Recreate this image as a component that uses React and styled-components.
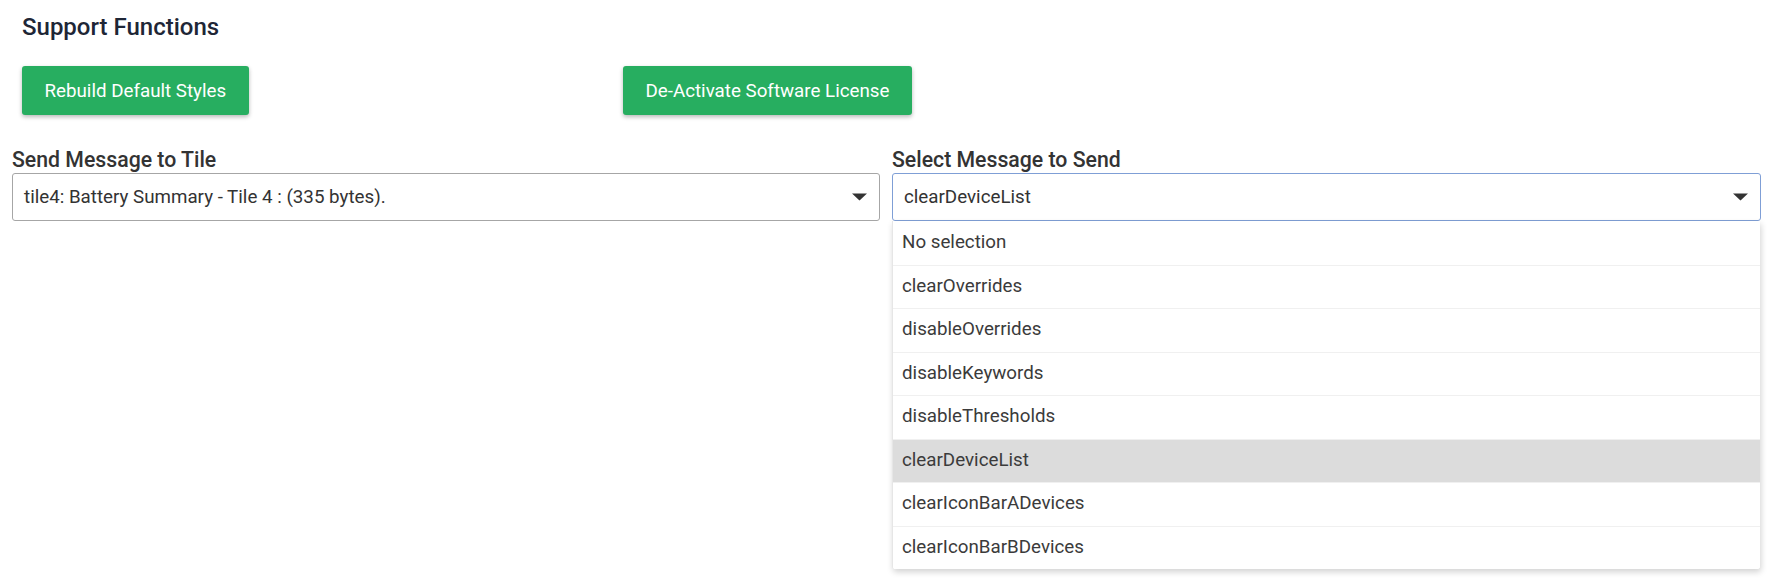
import React from "react";
import styled, { createGlobalStyle } from "styled-components";

const Global = createGlobalStyle`
  html, body { margin: 0; padding: 0; background: #ffffff; }
  body { font-family: Roboto, "Liberation Sans", Arial, sans-serif; overflow: hidden; }
  * { box-sizing: border-box; }
`;

const Page = styled.div`
  width: 1789px;
  height: 587px;
  padding: 13px 28px 0 12px;
`;

const Title = styled.h2`
  margin: 0 0 0 10px;
  font-size: 24px;
  line-height: 28px;
  font-weight: 500;
  color: #1e2636;
`;

const ButtonRow = styled.div`
  display: grid;
  grid-template-columns: 601px auto;
  justify-items: start;
  margin: 25px 0 0 10px;
`;

const GreenButton = styled.button`
  height: 49px;
  padding: 0 22.5px;
  border: none;
  border-radius: 3px;
  background: #27ae60;
  color: #ffffff;
  font-family: Roboto, "Liberation Sans", Arial, sans-serif;
  font-size: 18.75px;
  font-weight: 400;
  box-shadow: 0 2px 4px rgba(0, 0, 0, 0.28);
  cursor: pointer;
`;

const Fields = styled.div`
  display: grid;
  grid-template-columns: 868px 869px;
  column-gap: 12px;
  margin-top: 34px;
`;

const Field = styled.div`
  position: relative;
  display: flex;
  flex-direction: column;
`;

const Label = styled.label`
  font-size: 21.25px;
  line-height: 22px;
  font-weight: 500;
  color: #333333;
  margin-bottom: 2px;
`;

const SelectBox = styled.div`
  height: 48px;
  display: flex;
  align-items: center;
  justify-content: space-between;
  padding: 0 12px 0 11px;
  border: 1px solid ${(p) => (p.$focused ? "#7f9fd6" : "#a6a6a6")};
  border-radius: 3px;
  background: #ffffff;
  font-size: 18.75px;
  color: #333333;
`;

const Arrow = styled.svg`
  width: 15px;
  height: 8px;
  flex: none;
`;

const Menu = styled.ul`
  position: absolute;
  top: 100%;
  left: 0;
  right: 1px;
  margin: 0;
  padding: 0;
  list-style: none;
  background: #ffffff;
  border-left: 1px solid #e6e6e6;
  border-radius: 0 0 3px 3px;
  box-shadow: 1px 3px 6px rgba(0, 0, 0, 0.18);
  overflow: hidden;
`;

const Option = styled.li`
  height: 43.5px;
  display: flex;
  align-items: center;
  padding: 0 0 2px 9px;
  font-size: 18.75px;
  color: #3b3b3b;
  background: ${(p) => (p.$active ? "#dcdcdc" : "#ffffff")};
  border-top: ${(p) => (p.$first ? "none" : "1px solid #f0f0f0")};
`;

const Caret = () => (
  <Arrow viewBox="0 0 15 8">
    <path d="M0 0.5 L15 0.5 L7.5 7.5 Z" fill="#333333" />
  </Arrow>
);

const options = [
  "No selection",
  "clearOverrides",
  "disableOverrides",
  "disableKeywords",
  "disableThresholds",
  "clearDeviceList",
  "clearIconBarADevices",
  "clearIconBarBDevices",
];

export default function App() {
  return (
    <>
      <Global />
      <Page>
        <Title>Support Functions</Title>
        <ButtonRow>
          <GreenButton>Rebuild Default Styles</GreenButton>
          <GreenButton>De-Activate Software License</GreenButton>
        </ButtonRow>
        <Fields>
          <Field>
            <Label>Send Message to Tile</Label>
            <SelectBox>
              <span>tile4: Battery Summary - Tile 4 : (335 bytes).</span>
              <Caret />
            </SelectBox>
          </Field>
          <Field>
            <Label>Select Message to Send</Label>
            <SelectBox $focused>
              <span>clearDeviceList</span>
              <Caret />
            </SelectBox>
            <Menu>
              {options.map((o, i) => (
                <Option key={o} $first={i === 0} $active={o === "clearDeviceList"}>
                  {o}
                </Option>
              ))}
            </Menu>
          </Field>
        </Fields>
      </Page>
    </>
  );
}
